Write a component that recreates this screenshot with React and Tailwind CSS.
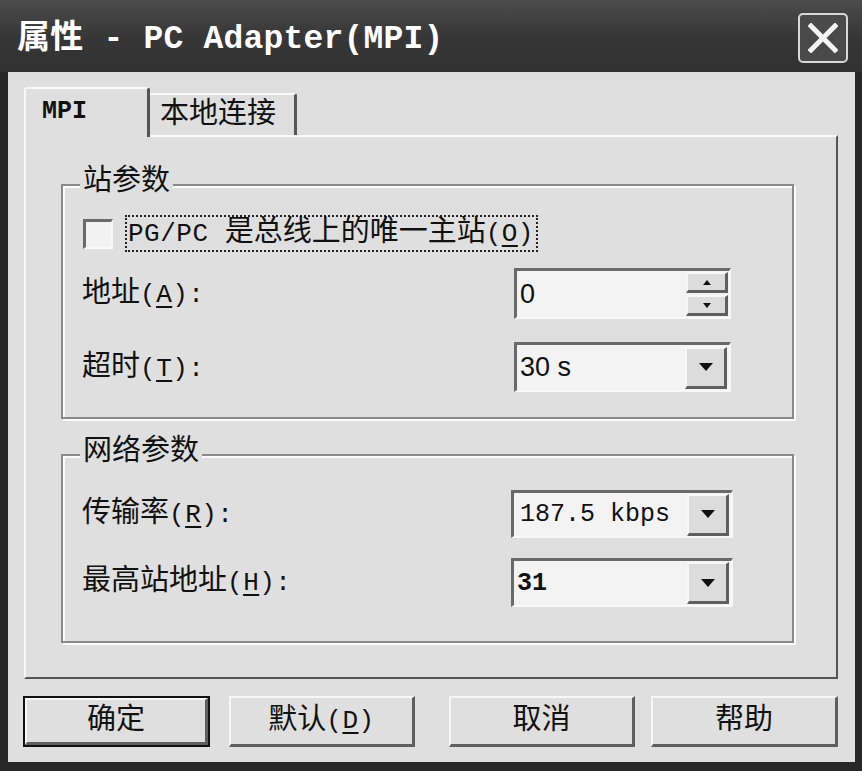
import { useState } from 'react'

const raised =
  'border-t-2 border-l-2 border-r-[3px] border-b-[3px] border-t-[#f7f7f7] border-l-[#f7f7f7] border-r-[#5f5f5f] border-b-[#5f5f5f]'
const sunken =
  'border-t-[3px] border-l-[3px] border-r-2 border-b-2 border-t-[#6a6a6a] border-l-[#6a6a6a] border-r-[#f8f8f8] border-b-[#f8f8f8]'

// 半角文字（宋体风格，半个字宽）
function Lat({ children }) {
  return <span className="text-[26px] tracking-[0.5px]">{children}</span>
}

function Key({ children }) {
  return <span className="underline underline-offset-[4px] decoration-2">{children}</span>
}

function Arrow({ down = true, small = false }) {
  const w = small ? 8 : 14
  const h = small ? 5 : 8
  return (
    <svg width={w} height={h} viewBox={`0 0 ${w} ${h}`}>
      {down ? (
        <polygon points={`0,0 ${w},0 ${w / 2},${h}`} fill="#111" />
      ) : (
        <polygon points={`0,${h} ${w},${h} ${w / 2},0`} fill="#111" />
      )}
    </svg>
  )
}

function Combo({ value, width = 'w-[217px]', height = 'h-[50px]', valueClass = '' }) {
  return (
    <div className={`${width} ${height} ${sunken} bg-[#f3f3f3] flex items-center pr-[2px]`}>
      <span className={`flex-1 pl-[3px] leading-none ${valueClass}`}>{value}</span>
      <div className={`w-[42px] h-[42px] ${raised} bg-[#dcdcdc] flex items-center justify-center`}>
        <Arrow />
      </div>
    </div>
  )
}

function Spin({ value }) {
  return (
    <div className={`w-[217px] h-[51px] ${sunken} bg-[#f3f3f3] flex items-center pr-[1px]`}>
      <span className="flex-1 pl-[3px] leading-none text-[27px] font-['Liberation_Sans',sans-serif]">{value}</span>
      <div className="flex flex-col gap-[2px]">
        <div className={`w-[42px] h-[21px] ${raised} bg-[#dcdcdc] flex items-center justify-center`}>
          <Arrow down={false} small />
        </div>
        <div className={`w-[42px] h-[21px] ${raised} bg-[#dcdcdc] flex items-center justify-center`}>
          <Arrow small />
        </div>
      </div>
    </div>
  )
}

function Group({ title, className = '', children }) {
  return (
    <div
      className={`relative border-2 border-[#8a8a8a] shadow-[2px_2px_0_#fbfbfb,inset_2px_2px_0_#fbfbfb] ${className}`}
    >
      <span className="absolute left-[17px] -top-[20px] px-[3px] bg-[#dfdfdf] text-[29px] leading-[34px]">
        {title}
      </span>
      {children}
    </div>
  )
}

function Btn({ children, isDefault = false, className = '' }) {
  const face = (
    <div className={`h-full w-full ${raised} bg-[#dfdfdf] flex items-center justify-center text-[29px] leading-none`}>
      {children}
    </div>
  )
  if (isDefault) {
    return <div className={`w-[187px] h-[51px] border-2 border-[#111] ${className}`}>{face}</div>
  }
  return <div className={`w-[186px] h-[51px] ${className}`}>{face}</div>
}

export default function App() {
  const [checked, setChecked] = useState(false)

  return (
    <div className="w-[862px] h-[771px] bg-[#262626] flex flex-col font-['Liberation_Mono','Noto_Sans_CJK_SC',monospace] text-[#111]">
      {/* 标题栏 */}
      <div className="h-[72px] shrink-0 flex items-center pl-[17px] pr-[14px] bg-linear-to-b from-[#4c4c4c] via-[#373737] to-[#313131]">
        <span className="text-white text-[33px] font-bold leading-none pt-[6px] tracking-[0.2px] whitespace-pre">
          属性 - PC Adapter(MPI)
        </span>
        <button className="ml-auto mt-[4px] w-[50px] h-[50px] rounded-[5px] border-2 border-[#d8d8d8] bg-[#4a4a4a] flex items-center justify-center">
          <svg width="30" height="30" viewBox="0 0 30 30">
            <path d="M3 3 L27 27 M27 3 L3 27" stroke="#f4f4f4" strokeWidth="5" strokeLinecap="square" />
          </svg>
        </button>
      </div>

      {/* 客户区 */}
      <div className="flex-1 ml-[8px] mr-[7px] mb-[9px] bg-[#dfdfdf] flex flex-col pt-[15px] pl-[16px] pr-[17px] pb-[15px]">
        {/* 选项卡 */}
        <div className="flex items-end h-[48px]">
          <div className="relative z-10 -mb-[2px] w-[126px] h-[50px] bg-[#dfdfdf] border-t-2 border-l-2 border-r-[3px] border-t-[#f8f8f8] border-l-[#f8f8f8] border-r-[#555] rounded-t-[3px] pl-[16px] pt-[10px] text-[25px] font-bold leading-none">
            MPI
          </div>
          <div className="w-[147px] h-[42px] border-t-2 border-r-[3px] border-t-[#f8f8f8] border-r-[#555] rounded-tr-[3px] pl-[10px] pt-[6px] text-[29px] leading-none">
            本地连接
          </div>
        </div>

        {/* 面板 */}
        <div className="h-[544px] border-2 border-t-[#f8f8f8] border-l-[#f8f8f8] border-r-[#555] border-b-[#555] pt-[47px] pl-[35px] pr-[42px]">
          <Group title="站参数">
            <div className="flex flex-col pl-[19px] pr-[61px] pt-[29px] pb-[25px] text-[29px] leading-none">
              <div className="flex items-center h-[37px]">
                <button
                  onClick={() => setChecked(!checked)}
                  className={`ml-[1px] w-[30px] h-[30px] ${sunken} bg-[#f2f2f2] flex items-center justify-center`}
                >
                  {checked && (
                    <svg width="18" height="18" viewBox="0 0 18 18">
                      <path d="M3 9 L7 13 L15 4" stroke="#111" strokeWidth="3" fill="none" />
                    </svg>
                  )}
                </button>
                <span className="ml-[12px] h-[37px] border-2 border-dotted border-[#222] flex items-center pl-[1px] pr-[2px] whitespace-pre">
                  <Lat>PG/PC </Lat>是总线上的唯一主站<Lat>(<Key>O</Key>)</Lat>
                </span>
              </div>
              <div className="flex items-center justify-between h-[51px] mt-[16px]">
                <span className="pt-[2px]">
                  地址<Lat>(<Key>A</Key>):</Lat>
                </span>
                <Spin value="0" />
              </div>
              <div className="flex items-center justify-between h-[50px] mt-[23px]">
                <span className="pt-[2px]">
                  超时<Lat>(<Key>T</Key>):</Lat>
                </span>
                <Combo value="30 s" valueClass="text-[27px] font-['Liberation_Sans',sans-serif]" />
              </div>
            </div>
          </Group>

          <Group title="网络参数" className="mt-[35px]">
            <div className="flex flex-col pl-[19px] pr-[59px] pt-[34px] pb-[34px] text-[29px] leading-none">
              <div className="flex items-center justify-between h-[48px]">
                <span>
                  传输率<Lat>(<Key>R</Key>):</Lat>
                </span>
                <Combo value="187.5 kbps" width="w-[222px]" height="h-[48px]" valueClass="text-[25px] pl-[6px]" />
              </div>
              <div className="flex items-center justify-between h-[49px] mt-[20px]">
                <span>
                  最高站地址<Lat>(<Key>H</Key>):</Lat>
                </span>
                <Combo value="31" width="w-[222px]" height="h-[49px]" valueClass="text-[25px] font-bold" />
              </div>
            </div>
          </Group>
        </div>

        {/* 按钮 */}
        <div className="flex mt-[17px] h-[51px] -ml-[1px]">
          <Btn isDefault>确定</Btn>
          <Btn className="ml-[19px]">
            默认<Lat>(<Key>D</Key>)</Lat>
          </Btn>
          <Btn className="ml-[34px]">取消</Btn>
          <Btn className="ml-[16px] w-[187px]">帮助</Btn>
        </div>
      </div>
    </div>
  )
}
